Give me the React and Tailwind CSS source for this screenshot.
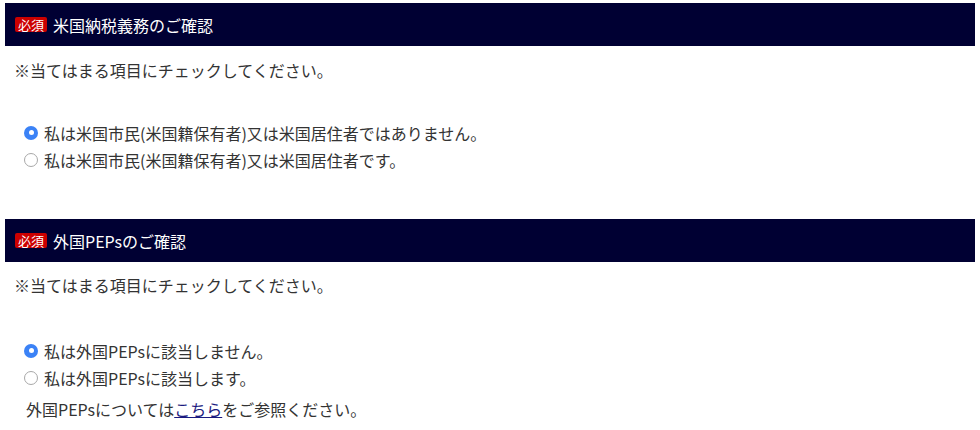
import React from "react";

const font = { fontFamily: '"Noto Sans CJK JP", "Noto Sans", sans-serif' };

function Header({ title }) {
  return (
    <div className="h-[43px] bg-[#000033] flex items-center pl-[10px] gap-[6px]">
      <span className="bg-[#cc0000] text-white text-[13px] leading-[15px] px-[3px] rounded-[2px]">必須</span>
      <span className="text-white text-[16px] leading-[20px]">{title}</span>
    </div>
  );
}

function Radio({ checked, label }) {
  return (
    <div className="h-[27px] flex items-center pl-[19px] gap-[6px]">
      {checked ? (
        <span className="w-[14px] h-[14px] rounded-full bg-[#3b82f6] flex items-center justify-center shrink-0">
          <span className="w-[5px] h-[5px] rounded-full bg-white" />
        </span>
      ) : (
        <span className="w-[14px] h-[14px] rounded-full bg-white border border-[#a8a8a8] shrink-0" />
      )}
      <span className="text-[16px] leading-[20px] text-[#333]">{label}</span>
    </div>
  );
}

export default function App() {
  return (
    <div className="w-[980px] h-[430px] bg-white px-[5px] pt-[3px]" style={font}>
      <Header title="米国納税義務のご確認" />
      <div className="pl-[9px] mt-[14px] text-[16px] leading-[20px] text-[#333]">※当てはまる項目にチェックしてください。</div>
      <div className="mt-[39px]">
        <Radio checked label="私は米国市民(米国籍保有者)又は米国居住者ではありません。" />
        <Radio label="私は米国市民(米国籍保有者)又は米国居住者です。" />
      </div>
      <div className="mt-[46px]">
        <Header title="外国PEPsのご確認" />
      </div>
      <div className="pl-[9px] mt-[13px] text-[16px] leading-[20px] text-[#333]">※当てはまる項目にチェックしてください。</div>
      <div className="mt-[42px]">
        <Radio checked label="私は外国PEPsに該当しません。" />
        <Radio label="私は外国PEPsに該当します。" />
      </div>
      <div className="pl-[21px] mt-[8px] text-[16px] leading-[20px] text-[#333]">
        外国PEPsについては<a className="text-[#1a1a80] underline">こちら</a>をご参照ください。
      </div>
    </div>
  );
}
